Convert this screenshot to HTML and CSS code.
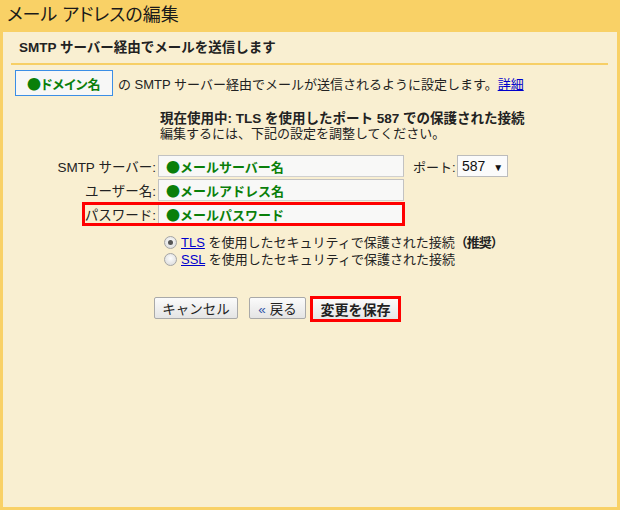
FILE: index.html
```html
<!DOCTYPE html>
<html lang="ja">
<head>
<meta charset="utf-8">
<title>メール アドレスの編集</title>
<link rel="stylesheet" href="styles.css">
</head>
<body>
<div class="frame">
  <div class="title">メール アドレスの編集</div>
  <div class="panel">
    <div class="subhead">SMTP サーバー経由でメールを送信します</div>
    <div class="domain-row">
      <div class="domain-box"><span class="dot">●</span>ドメイン名</div>
      <span class="domain-text">の SMTP サーバー経由でメールが送信されるように設定します。<a href="#" class="link">詳細</a></span>
    </div>
    <div class="status">
      <div class="status-main">現在使用中: TLS を使用したポート 587 での保護された接続</div>
      <div class="status-sub">編集するには、下記の設定を調整してください。</div>
    </div>
    <div class="form">
      <div class="row">
        <label class="label">SMTP サーバー:</label>
        <div class="input"><span class="dot">●</span>メールサーバー名</div>
        <span class="port-label">ポート:</span>
        <div class="select">587 <span class="arrow">▼</span></div>
      </div>
      <div class="row">
        <label class="label">ユーザー名:</label>
        <div class="input"><span class="dot">●</span>メールアドレス名</div>
      </div>
      <div class="row">
        <span class="highlight"></span>
        <label class="label">パスワード:</label>
        <div class="input"><span class="dot">●</span>メールパスワード</div>
      </div>
    </div>
    <div class="radios">
      <div class="radio-row"><span class="radio checked"></span><a href="#" class="link">TLS</a> を使用したセキュリティで保護された接続<b class="rec">（推奨）</b></div>
      <div class="radio-row"><span class="radio"></span><a href="#" class="link">SSL</a> を使用したセキュリティで保護された接続</div>
    </div>
    <div class="buttons">
      <button class="btn cancel">キャンセル</button>
      <button class="btn back"><span class="guil">«</span> 戻る</button>
      <button class="btn save">変更を保存</button>
    </div>
  </div>
</div>
</body>
</html>
```
FILE: styles.css
```css
* { box-sizing: border-box; }
body {
  margin: 0;
  font-family: "Liberation Sans", "Noto Sans CJK JP", sans-serif;
  font-size: 13px;
  color: #222;
}
.frame {
  width: 620px;
  height: 510px;
  background: #f9d166;
  padding: 0 3px 3px 3px;
  display: flex;
  flex-direction: column;
}
.title {
  height: 32px;
  font-size: 18px;
  line-height: 30px;
  padding-left: 4px;
  color: #1a1a1a;
  font-feature-settings: "palt";
}
.panel {
  flex: 1;
  background: #f9efd1;
  padding: 0 9px 0 8px;
}
.subhead {
  height: 33px;
  line-height: 31px;
  padding-left: 8px;
  font-weight: bold;
  font-size: 13.5px;
  border-bottom: 2px solid #f7cf66;
}
.domain-row {
  display: flex;
  align-items: center;
  margin-top: 5px;
  margin-left: 4px;
}
.domain-box {
  width: 98px;
  height: 26px;
  border: 1px solid #3b8ee6;
  background: #f7f7f6;
  color: #0a7f0a;
  font-weight: bold;
  line-height: 24px;
  padding-left: 11px;
  white-space: nowrap;
  font-feature-settings: "palt";
}
.dot {
  font-family: "Noto Sans CJK JP", sans-serif;
  font-weight: normal;
  font-size: 14px;
}
.domain-text {
  margin-left: 5px;
  color: #222;
}
.link {
  color: #0000cc;
  text-decoration: underline;
}
.status {
  margin-top: 15px;
  margin-left: 149px;
  line-height: 15px;
}
.status-main { font-weight: bold; font-size: 13.5px; }
.form {
  margin-top: 14px;
  display: flex;
  flex-direction: column;
  gap: 2px;
}
.row {
  display: flex;
  align-items: center;
  position: relative;
}
.label {
  flex: 0 0 145px;
  text-align: right;
  margin-right: 2px;
  color: #222;
  font-size: 13.5px;
  white-space: nowrap;
}
.input {
  flex: 0 0 246px;
  height: 22px;
  border: 1px solid #c2c2c2;
  border-bottom-color: #d0d0d0;
  background: #f8f8f7;
  color: #0a7f0a;
  font-weight: bold;
  line-height: 20px;
  padding-left: 7px;
  white-space: nowrap;
}
.port-label {
  flex: 0 0 44px;
  margin-left: 9px;
  white-space: nowrap;
}
.select {
  flex: 0 0 51px;
  height: 22px;
  border: 1px solid #bcbcbc;
  background: #fbfbfb;
  line-height: 20px;
  padding-left: 4px;
  font-size: 14px;
  color: #111;
  white-space: nowrap;
}
.arrow { font-size: 10px; margin-left: 4px; }
.highlight {
  position: absolute;
  left: 71px;
  top: -1px;
  width: 323px;
  height: 24px;
  border: 3px solid #ff0000;
  pointer-events: none;
}
.radios {
  margin-top: 9px;
  margin-left: 153px;
}
.radio-row {
  height: 17px;
  line-height: 17px;
  white-space: nowrap;
}
.radio {
  display: inline-block;
  vertical-align: -2px;
  width: 13px;
  height: 13px;
  border-radius: 50%;
  border: 1px solid #a5a5a5;
  background: radial-gradient(circle at 50% 40%, #fdfdfd, #d6d6d6);
  margin-right: 4px;
  position: relative;
}
.radio.checked::after {
  content: "";
  position: absolute;
  left: 3px;
  top: 3px;
  width: 5px;
  height: 5px;
  border-radius: 50%;
  background: #555;
}
.rec { font-weight: bold; letter-spacing: -1px; }
.buttons {
  margin-top: 28px;
  margin-left: 143px;
  display: flex;
  align-items: flex-start;
}
.btn {
  font-family: "Liberation Sans", "Noto Sans CJK JP", sans-serif;
  font-size: 13.5px;
  height: 22px;
  padding: 0;
  margin-top: 1px;
  border: 1px solid #a9a9a9;
  background: linear-gradient(#fbfbfb, #e4e4e4);
  color: #222;
  border-radius: 2px;
  white-space: nowrap;
}
.cancel { width: 84px; }
.back { width: 57px; margin-left: 11px; }
.guil { color: #3355aa; }
.save {
  margin-top: 0;
  margin-left: 4px;
  width: 91px;
  height: 26px;
  border: 3px solid #ff0000;
  border-radius: 0;
  font-weight: bold;
  font-size: 14px;
  background: linear-gradient(#fbfbfb, #e6e6e6);
}
```
